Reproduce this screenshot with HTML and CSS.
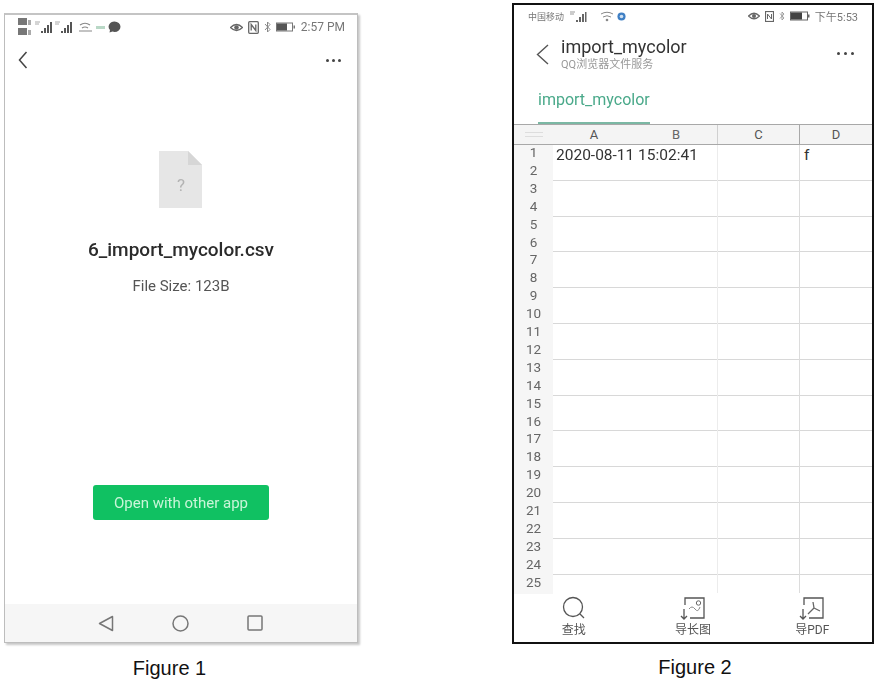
FILE: index.html
```html
<!DOCTYPE html>
<html lang="en">
<head>
  <meta charset="UTF-8" />
  <title>Figure 1 and Figure 2</title>
  <link rel="stylesheet" href="styles.css">
</head>
<body>
  <div class="page">

    <!-- Figure 1 -->
    <div class="figure figure-one">
      <div class="phone-one">
        <div class="status-one">
          <div class="status-group">
            <svg class="sim-icons" width="14" height="18" viewBox="0 0 14 18">
              <rect x="0" y="0" width="9" height="7" fill="#777"/><rect x="10" y="2" width="3" height="5" fill="#aaa"/>
              <rect x="0" y="10" width="9" height="7" fill="#777"/><rect x="10" y="12" width="3" height="5" fill="#aaa"/>
            </svg>
            <svg class="signal" width="17" height="14" viewBox="0 0 17 14">
              <path d="M0 2h5M0 4h4" stroke="#aaa" stroke-width="1"/>
              <path d="M6 11h2v2H6zM9 8h2v5H9zM12 5h2v8h-2zM15 2h2v11h-2z" fill="#555"/>
            </svg>
            <svg class="signal" width="17" height="14" viewBox="0 0 17 14">
              <path d="M0 2h5M0 4h4" stroke="#aaa" stroke-width="1"/>
              <path d="M6 11h2v2H6zM9 8h2v5H9zM12 5h2v8h-2zM15 2h2v11h-2z" fill="#555"/>
            </svg>
            <svg class="wifi-one" width="15" height="12" viewBox="0 0 15 12">
              <path d="M2 4q5-3.500 10 0M4 7q3-2 6 0M1 10h13" fill="none" stroke="#888" stroke-width="1.200"/>
            </svg>
            <span class="net-speed"></span>
            <svg width="13" height="12" viewBox="0 0 13 12">
              <path d="M6.500 0.500a6 5.200 0 0 1 0 10.400q-1 0-2-.3L1.500 11.500l.5-2.500a6 5.200 0 0 1 4.500-8.500z" fill="#555"/>
            </svg>
          </div>
          <div class="status-group status-right">
            <svg width="13" height="11" viewBox="0 0 13 11">
              <path d="M0.500 5.500q6-6 12 0q-6 6-12 0z" fill="none" stroke="#666" stroke-width="1.300"/>
              <circle cx="6.500" cy="5.500" r="2.300" fill="#666"/>
            </svg>
            <svg width="11" height="13" viewBox="0 0 11 13">
              <rect x="0.700" y="0.700" width="9.600" height="11.600" rx="1" fill="none" stroke="#666" stroke-width="1.300"/>
              <path d="M3.200 9.500v-6l4.600 6v-6" fill="none" stroke="#666" stroke-width="1.300"/>
            </svg>
            <svg width="7" height="12" viewBox="0 0 7 12">
              <path d="M1 3l5 5.500-2.500 2.500v-10l2.500 2.500-5 5.500" fill="none" stroke="#888" stroke-width="1"/>
            </svg>
            <svg class="battery" width="20" height="10" viewBox="0 0 20 10">
              <rect x="0.500" y="1" width="16" height="8" fill="none" stroke="#777"/>
              <rect x="1" y="1.500" width="10" height="7" fill="#555"/>
              <rect x="17.500" y="3.500" width="1.500" height="3" fill="#777"/>
            </svg>
            <span class="clock">2:57 PM</span>
          </div>
        </div>

        <div class="topbar-one">
          <svg width="10" height="18" viewBox="0 0 10 18">
            <path d="M8.500 1L1.500 9l7 8" fill="none" stroke="#444" stroke-width="1.500"/>
          </svg>
          <div class="dots"><i></i><i></i><i></i></div>
        </div>

        <div class="file-info">
          <div class="file-icon">
            <svg width="43" height="57" viewBox="0 0 43 57">
              <path d="M0 0h29l14 14v43H0z" fill="#e6e6e6"/>
              <path d="M29 0l14 14H29z" fill="#d6d6d6"/>
            </svg>
            <span class="file-mark">?</span>
          </div>
          <h2 class="file-name">6_import_mycolor.csv</h2>
          <p class="file-size">File Size: 123B</p>
        </div>

        <button class="open-btn">Open with other app</button>

        <div class="navbar">
          <svg width="16" height="17" viewBox="0 0 16 17">
            <path d="M14.500 1.500v14L1.500 8.500z" fill="none" stroke="#777" stroke-width="1.500" stroke-linejoin="round"/>
          </svg>
          <svg width="17" height="17" viewBox="0 0 17 17">
            <circle cx="8.500" cy="8.500" r="7.500" fill="none" stroke="#777" stroke-width="1.500"/>
          </svg>
          <svg width="16" height="16" viewBox="0 0 16 16">
            <rect x="1" y="1" width="14" height="14" rx="1" fill="none" stroke="#777" stroke-width="1.500"/>
          </svg>
        </div>
      </div>
      <div class="caption caption-one">Figure 1</div>
    </div>

    <!-- Figure 2 -->
    <div class="figure figure-two">
      <div class="phone-two">
        <div class="status-two">
          <div class="status-group">
            <span class="status-text">中国移动</span>
            <svg class="signal-two" width="20" height="11" viewBox="0 0 20 11">
              <path d="M2 1h5M2 3h4" stroke="#999"/>
              <path d="M8 9h2v2H8zM11 6h2v5h-2zM14 3h2v8h-2zM17 1h1.500v10H17z" fill="#666"/>
            </svg>
            <svg class="wifi-two" width="14" height="11" viewBox="0 0 14 11">
              <path d="M1 3q6-3.500 12 0M3 6q4-2.500 8 0" fill="none" stroke="#888"/>
              <circle cx="7" cy="9" r="1.300" fill="#888"/>
            </svg>
            <svg width="9" height="9" viewBox="0 0 10 10">
              <circle cx="5" cy="5" r="4.500" fill="#3f7fc4"/>
              <circle cx="5" cy="5" r="2" fill="#cfe0f2"/>
            </svg>
          </div>
          <div class="status-group status-right-two">
            <svg width="12" height="10" viewBox="0 0 12 10">
              <path d="M0.500 5q5.500-5.500 11 0q-5.500 5.500-11 0z" fill="none" stroke="#666" stroke-width="1.200"/>
              <circle cx="6" cy="5" r="2" fill="#666"/>
            </svg>
            <svg width="9" height="11" viewBox="0 0 9 11">
              <rect x="0.500" y="0.500" width="8" height="10" fill="none" stroke="#666" stroke-width="1.200"/>
              <path d="M2.500 8V3l4 5V3" fill="none" stroke="#666"/>
            </svg>
            <svg width="6" height="10" viewBox="0 0 6 10">
              <path d="M1 2.500l4 4.500-2 2V1l2 2-4 4.500" fill="none" stroke="#999" stroke-width=".9"/>
            </svg>
            <svg class="battery-two" width="20" height="10" viewBox="0 0 20 10">
              <rect x="0.500" y="1" width="17" height="8" fill="none" stroke="#666"/>
              <rect x="1" y="1.500" width="11" height="7" fill="#444"/>
              <rect x="18" y="3.500" width="1.500" height="3" fill="#666"/>
            </svg>
            <span class="status-time">下午5:53</span>
          </div>
        </div>

        <div class="topbar-two">
          <svg class="back-two" width="13" height="21" viewBox="0 0 13 21">
            <path d="M12 1L1.500 10.500 12 20" fill="none" stroke="#555" stroke-width="1.400"/>
          </svg>
          <div class="title-block">
            <div class="doc-title">import_mycolor</div>
            <div class="doc-sub">QQ浏览器文件服务</div>
          </div>
          <div class="dots dots-two"><i></i><i></i><i></i></div>
        </div>

        <div class="tab-row">
          <span class="tab">import_mycolor</span>
        </div>

        <div class="sheet">
          <div class="sheet-head">
            <div class="corner"><i></i></div>
            <div class="col-name col-a">A</div>
            <div class="col-name col-b">B</div>
            <div class="col-name col-c">C</div>
            <div class="col-name col-d">D</div>
          </div>

          <div class="pair">
            <div class="row-nums"><span>1</span><span>2</span></div>
            <div class="cell cell-wide"><span class="cell-date">2020-08-11 15:02:41</span></div>
            <div class="cell cell-c"></div>
            <div class="cell cell-d"><span class="cell-f">f</span></div>
          </div>
          <div class="pair">
            <div class="row-nums"><span>3</span><span>4</span></div>
            <div class="cell cell-wide"></div><div class="cell cell-c"></div><div class="cell cell-d"></div>
          </div>
          <div class="pair">
            <div class="row-nums"><span>5</span><span>6</span></div>
            <div class="cell cell-wide"></div><div class="cell cell-c"></div><div class="cell cell-d"></div>
          </div>
          <div class="pair">
            <div class="row-nums"><span>7</span><span>8</span></div>
            <div class="cell cell-wide"></div><div class="cell cell-c"></div><div class="cell cell-d"></div>
          </div>
          <div class="pair">
            <div class="row-nums"><span>9</span><span>10</span></div>
            <div class="cell cell-wide"></div><div class="cell cell-c"></div><div class="cell cell-d"></div>
          </div>
          <div class="pair">
            <div class="row-nums"><span>11</span><span>12</span></div>
            <div class="cell cell-wide"></div><div class="cell cell-c"></div><div class="cell cell-d"></div>
          </div>
          <div class="pair">
            <div class="row-nums"><span>13</span><span>14</span></div>
            <div class="cell cell-wide"></div><div class="cell cell-c"></div><div class="cell cell-d"></div>
          </div>
          <div class="pair">
            <div class="row-nums"><span>15</span><span>16</span></div>
            <div class="cell cell-wide"></div><div class="cell cell-c"></div><div class="cell cell-d"></div>
          </div>
          <div class="pair">
            <div class="row-nums"><span>17</span><span>18</span></div>
            <div class="cell cell-wide"></div><div class="cell cell-c"></div><div class="cell cell-d"></div>
          </div>
          <div class="pair">
            <div class="row-nums"><span>19</span><span>20</span></div>
            <div class="cell cell-wide"></div><div class="cell cell-c"></div><div class="cell cell-d"></div>
          </div>
          <div class="pair">
            <div class="row-nums"><span>21</span><span>22</span></div>
            <div class="cell cell-wide"></div><div class="cell cell-c"></div><div class="cell cell-d"></div>
          </div>
          <div class="pair">
            <div class="row-nums"><span>23</span><span>24</span></div>
            <div class="cell cell-wide"></div><div class="cell cell-c"></div><div class="cell cell-d"></div>
          </div>
          <div class="pair pair-last">
            <div class="row-nums"><span>25</span></div>
            <div class="cell cell-wide"></div><div class="cell cell-c"></div><div class="cell cell-d"></div>
          </div>
        </div>

        <div class="toolbar">
          <div class="tool">
            <svg width="26" height="26" viewBox="0 0 26 26">
              <circle cx="12" cy="11" r="9.500" fill="none" stroke="#555" stroke-width="1.300"/>
              <path d="M19 18l4 4" stroke="#555" stroke-width="1.300"/>
            </svg>
            <span>查找</span>
          </div>
          <div class="tool">
            <svg width="26" height="26" viewBox="0 0 26 26">
              <path d="M5 9V2h19v20H10" fill="none" stroke="#555" stroke-width="1.300"/>
              <path d="M4 13v10M1 20l3 3 3-3" fill="none" stroke="#555" stroke-width="1.300"/>
              <path d="M9 13q3-4 6 0t5-2" fill="none" stroke="#888"/>
              <circle cx="18.500" cy="7" r="2.200" fill="none" stroke="#666"/>
            </svg>
            <span>导长图</span>
          </div>
          <div class="tool">
            <svg width="26" height="26" viewBox="0 0 26 26">
              <path d="M5 9V2h19v20H10" fill="none" stroke="#555" stroke-width="1.300"/>
              <path d="M4 13v10M1 20l3 3 3-3" fill="none" stroke="#555" stroke-width="1.300"/>
              <path d="M14 6l1 6-6 6M15 12l6 3" fill="none" stroke="#666" stroke-width="1.300"/>
            </svg>
            <span>导PDF</span>
          </div>
        </div>
      </div>
      <div class="caption caption-two">Figure 2</div>
    </div>

  </div>
</body>
</html>
```

FILE: styles.css
```css
* {
  box-sizing: border-box;
  margin: 0;
  padding: 0;
}

body {
  background: white;
  font-family: Roboto, "Noto Sans CJK SC", sans-serif;
  color: #333;
}

.page {
  display: flex;
  align-items: flex-start;
  width: 878px;
  height: 687px;
  padding-left: 4px;
  overflow: hidden;
}

.figure {
  display: flex;
  flex-direction: column;
}

.figure-one {
  width: 354px;
  margin-top: 13px;
}

.figure-two {
  width: 362px;
  margin-top: 3px;
  margin-left: 154px;
}

.caption {
  font-family: "Liberation Sans", Arial, sans-serif;
  font-size: 20px;
  line-height: 22px;
  color: #111;
  text-align: center;
  margin-top: 12px;
}

.caption-one {
  margin-top: 14px;
  padding-right: 23px;
}

.caption-two {
  padding-left: 4px;
}

/* Figure 1 */
.phone-one {
  display: flex;
  flex-direction: column;
  align-items: center;
  width: 354px;
  height: 630px;
  background: white;
  border: 1px solid #bdbdbd;
  border-top: 2px solid #c4c4c4;
  box-shadow: 2px 2px 2px #c8c8c8;
}

.status-one {
  display: flex;
  align-items: center;
  justify-content: space-between;
  width: 100%;
  height: 24px;
  padding: 0 12px 0 13px;
  filter: blur(0.5px);
}

.status-group {
  display: flex;
  align-items: center;
  gap: 3px;
}

.status-right {
  gap: 5px;
}

.wifi-one {
  margin-left: 3px;
}

.net-speed {
  width: 9px;
  height: 3px;
  background: #b9d8c6;
}

.clock {
  font-size: 12px;
  color: #777;
}

.topbar-one {
  display: flex;
  align-items: center;
  justify-content: space-between;
  width: 100%;
  height: 30px;
  margin-top: 6px;
  padding: 0 16px 0 13px;
}

.dots {
  display: flex;
  gap: 3px;
}

.dots i {
  width: 3px;
  height: 3px;
  border-radius: 50%;
  background: #444;
}

.file-info {
  display: flex;
  flex-direction: column;
  align-items: center;
  margin-top: 76px;
  filter: blur(0.35px);
}

.file-icon {
  position: relative;
  width: 43px;
  height: 57px;
}

.file-icon svg {
  display: block;
}

.file-mark {
  position: absolute;
  left: 0;
  right: 0;
  top: 24px;
  text-align: center;
  font-size: 17px;
  line-height: 20px;
  color: #b3b3b3;
}

.file-name {
  font-size: 19px;
  font-weight: 500;
  line-height: 24px;
  color: #2b2b2b;
  margin-top: 30px;
}

.file-size {
  font-size: 15px;
  line-height: 18px;
  color: #555;
  margin-top: 15px;
}

.open-btn {
  width: 176px;
  height: 35px;
  margin-top: 190px;
  border: none;
  border-radius: 3px;
  background: #10c162;
  color: #c9f5d9;
  font-family: Roboto, sans-serif;
  font-size: 15px;
  filter: blur(0.25px);
}

.navbar {
  display: flex;
  align-items: center;
  justify-content: center;
  gap: 58px;
  width: 100%;
  height: 38px;
  margin-top: auto;
  padding-right: 1px;
  background: #f6f6f6;
}

/* Figure 2 */
.phone-two {
  display: flex;
  flex-direction: column;
  width: 362px;
  height: 641px;
  background: white;
  border: 2px solid #111;
  overflow: hidden;
}

.status-two {
  display: flex;
  align-items: center;
  justify-content: space-between;
  height: 21px;
  padding: 1px 14px 0 14px;
  filter: blur(0.6px);
}

.status-right-two {
  gap: 5px;
}

.signal-two {
  margin-left: 1px;
}

.wifi-two {
  margin-left: 9px;
}

.status-text {
  font-size: 9px;
  color: #777;
}

.status-time {
  font-size: 11px;
  color: #777;
}

.topbar-two {
  display: flex;
  align-items: center;
  height: 49px;
  padding: 6px 0 0 22px;
  filter: blur(0.35px);
}

.back-two {
  margin-top: 2px;
}

.title-block {
  margin-left: 12px;
}

.doc-title {
  font-size: 18px;
  line-height: 22px;
  color: #333;
}

.doc-sub {
  font-size: 11px;
  line-height: 14px;
  color: #999;
}

.dots-two {
  margin-left: auto;
  margin-right: 18px;
  gap: 4px;
}

.tab-row {
  height: 49px;
  padding: 14px 0 0 24px;
}

.tab {
  display: inline-block;
  height: 35px;
  font-size: 16px;
  line-height: 22px;
  color: #4aa98a;
  border-bottom: 2px solid #7bb8a4;
  filter: blur(0.3px);
}

.sheet {
  border-top: 1px solid #a8a8a8;
}

.sheet-head {
  display: grid;
  grid-template-columns: 39px 82px 82px 82px 1fr;
  height: 20px;
  background: #f4f4f4;
  border-bottom: 1px solid #a8a8a8;
}

.corner {
  display: flex;
  align-items: center;
  justify-content: center;
}

.corner i {
  width: 18px;
  height: 5px;
  border-top: 1px solid #ddd;
  border-bottom: 1px solid #ddd;
}

.col-name {
  font-size: 13px;
  line-height: 19px;
  text-align: center;
  color: #555;
}

.col-b {
  color: #666;
}

.col-c {
  border-left: 1px solid #d0d0d0;
}

.col-d {
  border-left: 1px solid #a8a8a8;
}

.pair {
  display: grid;
  grid-template-columns: 39px 164px 82px 1fr;
  height: 35.800px;
  border-bottom: 1px solid #d8d8d8;
}

.pair-last {
  height: 18px;
  border-bottom: none;
}

.row-nums {
  display: flex;
  flex-direction: column;
  margin-bottom: -1px;
  background: #f6f6f6;
  border-bottom: 1px solid #777;
  font-size: 13.500px;
  color: #666;
  text-align: center;
  filter: blur(0.25px);
}

.pair-last .row-nums {
  border-bottom: none;
}

.row-nums span {
  height: 18px;
  line-height: 14px;
}

.cell {
  position: relative;
}

.cell-c {
  border-left: 1px solid #ececec;
}

.cell-d {
  border-left: 1px solid #dcdcdc;
}

.cell-date {
  display: block;
  padding-left: 3px;
  font-size: 15.500px;
  line-height: 20px;
  color: #333;
  white-space: nowrap;
  filter: blur(0.3px);
}

.cell-f {
  display: block;
  padding-left: 4px;
  font-size: 15.500px;
  line-height: 20px;
  color: #333;
}

.toolbar {
  display: grid;
  grid-template-columns: repeat(3, 1fr);
  flex: 1;
  padding-top: 3px;
  background: white;
}

.tool {
  display: flex;
  flex-direction: column;
  align-items: center;
  filter: blur(0.35px);
}

.tool span {
  font-size: 12px;
  line-height: 16px;
  color: #555;
}
```
